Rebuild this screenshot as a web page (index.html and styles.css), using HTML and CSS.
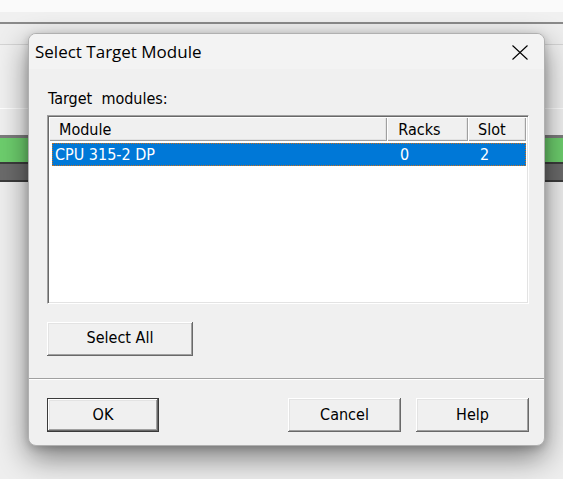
FILE: index.html
```html
<!DOCTYPE html>
<html>
<head>
<meta charset="utf-8">
<title>Select Target Module</title>
<link rel="stylesheet" href="styles.css">
</head>
<body>
<div class="app">
  <div class="band top-white"></div>
  <div class="band band-light"></div>
  <div class="band line-dark"></div>
  <div class="band panel"></div>
  <div class="band line-soft"></div>
  <div class="band area"></div>
  <div class="band line-white"></div>
  <div class="band area2"></div>
  <div class="band line-mid"></div>
  <div class="band green"></div>
  <div class="band line-black"></div>
  <div class="band gray"></div>
  <div class="band line-black"></div>
  <div class="band rest"></div>
</div>

<div class="dialog">
  <div class="titlebar">
    <span class="title">Select Target Module</span>
    <svg class="close" width="16" height="15" viewBox="0 0 16 15"><path d="M0.5 0.5 L15.5 14.5 M15.5 0.5 L0.5 14.5" stroke="#000" stroke-width="1.1" fill="none"/></svg>
  </div>
  <div class="content">
    <div class="label">Target&nbsp; modules:</div>
    <div class="listbox">
      <div class="header">
        <div class="hcell c1">Module</div>
        <div class="hcell c2">Racks</div>
        <div class="hcell c3">Slot</div>
      </div>
      <div class="row selected">
        <div class="cell c1">CPU 315-2 DP</div>
        <div class="cell c2">0</div>
        <div class="cell c3">2</div>
      </div>
    </div>
    <button class="btn select-all">Select All</button>
  </div>
  <div class="separator"></div>
  <div class="footer">
    <button class="btn default">OK</button>
    <div class="spacer"></div>
    <button class="btn">Cancel</button>
    <button class="btn">Help</button>
  </div>
</div>
</body>
</html>
```

FILE: styles.css
```css
html, body {
  margin: 0;
  padding: 0;
  width: 563px;
  height: 479px;
  overflow: hidden;
  background: #efefef;
}

.app {
  display: flex;
  flex-direction: column;
  width: 563px;
  height: 479px;
}

.band { flex: none; }
.top-white { height: 12px; background: #fafafa; }
.band-light { height: 10px; background: #f0f0f0; }
.line-dark { height: 2px; background: #8a8a8a; }
.panel { height: 20px; background: #eeeeee; }
.line-soft { height: 1px; background: #d4d4d4; }
.area { height: 63px; background: #f0f0f0; }
.line-white { height: 1px; background: #ffffff; }
.area2 { height: 26px; background: #f0f0f0; }
.line-mid { height: 3px; background: #7c7c7c; }
.green { height: 24px; background: #6dce6d; }
.line-black { height: 2px; background: #3c3c3c; }
.gray { height: 16px; background: #6b6b6b; }
.rest { flex: 1; background: #eeeeee; }

.dialog {
  position: absolute;
  left: 28px;
  top: 33px;
  width: 515px;
  height: 411px;
  border: 1px solid #b0b0b0;
  border-radius: 8px;
  background: #f0f0f0;
  box-shadow: 0 12px 30px rgba(0, 0, 0, 0.48), 0 2px 8px rgba(0, 0, 0, 0.18);
  display: flex;
  flex-direction: column;
  overflow: hidden;
  font-family: "DejaVu Sans Condensed", "Liberation Sans", Arial, sans-serif;
  font-size: 16px;
  color: #000;
}

.titlebar {
  height: 35px;
  flex: none;
  background: #f3f3f3;
  display: flex;
  align-items: center;
  padding-left: 6px;
  padding-right: 16px;
}

.title {
  font-family: "Open Sans", "Noto Sans", sans-serif;
  font-size: 17px;
  color: #000;
  flex: 1;
}

.close {
  display: block;
  margin-top: 1px;
}

.content {
  display: flex;
  flex-direction: column;
  align-items: flex-start;
  padding: 0 15px 0 18px;
  flex: none;
}

.label {
  margin-top: 20px;
  height: 20px;
  line-height: 20px;
  padding-left: 1px;
}

.listbox {
  margin-top: 6px;
  width: 482px;
  height: 189px;
  box-sizing: border-box;
  background: #fff;
  border-style: solid;
  border-width: 1px;
  border-color: #a0a0a0 #ffffff #ffffff #a0a0a0;
  box-shadow: inset 1px 1px #696969, inset -1px -1px #e3e3e3;
  padding: 1px 2px 1px 1px;
}

.header {
  display: flex;
  height: 24px;
  background: #f0f0f0;
}

.hcell {
  box-sizing: border-box;
  height: 24px;
  padding-top: 2px;
  line-height: 22px;
  box-shadow: inset 1px 1px #ffffff, inset -1px -1px #a0a0a0, inset -2px -2px #e3e3e3;
  white-space: nowrap;
}

.header .c1 { width: 339px; padding-left: 10px; }
.header .c2 { width: 81px; padding-left: 11px; }
.header .c3 { width: 58px; padding-left: 10px; }

.row {
  display: flex;
  height: 23px;
  line-height: 21px;
  margin: 2px 0 0 3px;
  width: 474px;
  box-sizing: border-box;
}

.row.selected {
  background: #0078d7;
  color: #fff;
  border: 1px dotted #c8701e;
}

.cell { white-space: nowrap; box-sizing: border-box; }
.row .c1 { width: 335px; padding-left: 2px; }
.row .c2 { width: 81px; padding-left: 12px; }
.row .c3 { flex: 1; padding-left: 11px; }

.btn {
  font-family: "DejaVu Sans Condensed", "Liberation Sans", Arial, sans-serif;
  font-size: 16px;
  line-height: 20px;
  color: #000;
  background: #f0f0f0;
  border: none;
  padding: 0;
  height: 34px;
  box-shadow: inset -1px -1px #696969, inset 1px 1px #ffffff, inset -2px -2px #a0a0a0, inset 2px 2px #e3e3e3;
}

.select-all {
  margin-top: 18px;
  width: 146px;
  padding-bottom: 2px;
}

.separator {
  margin-top: 22px;
  height: 1px;
  background: #a0a0a0;
  border-bottom: 1px solid #ffffff;
  flex: none;
}

.footer {
  display: flex;
  padding: 18px 15px 0 18px;
  gap: 15px;
}

.footer .btn {
  width: 113px;
}

.footer .btn.default {
  width: 112px;
  box-sizing: border-box;
  border: 1px solid #3a3a3a;
}

.spacer { flex: 1; }
```
